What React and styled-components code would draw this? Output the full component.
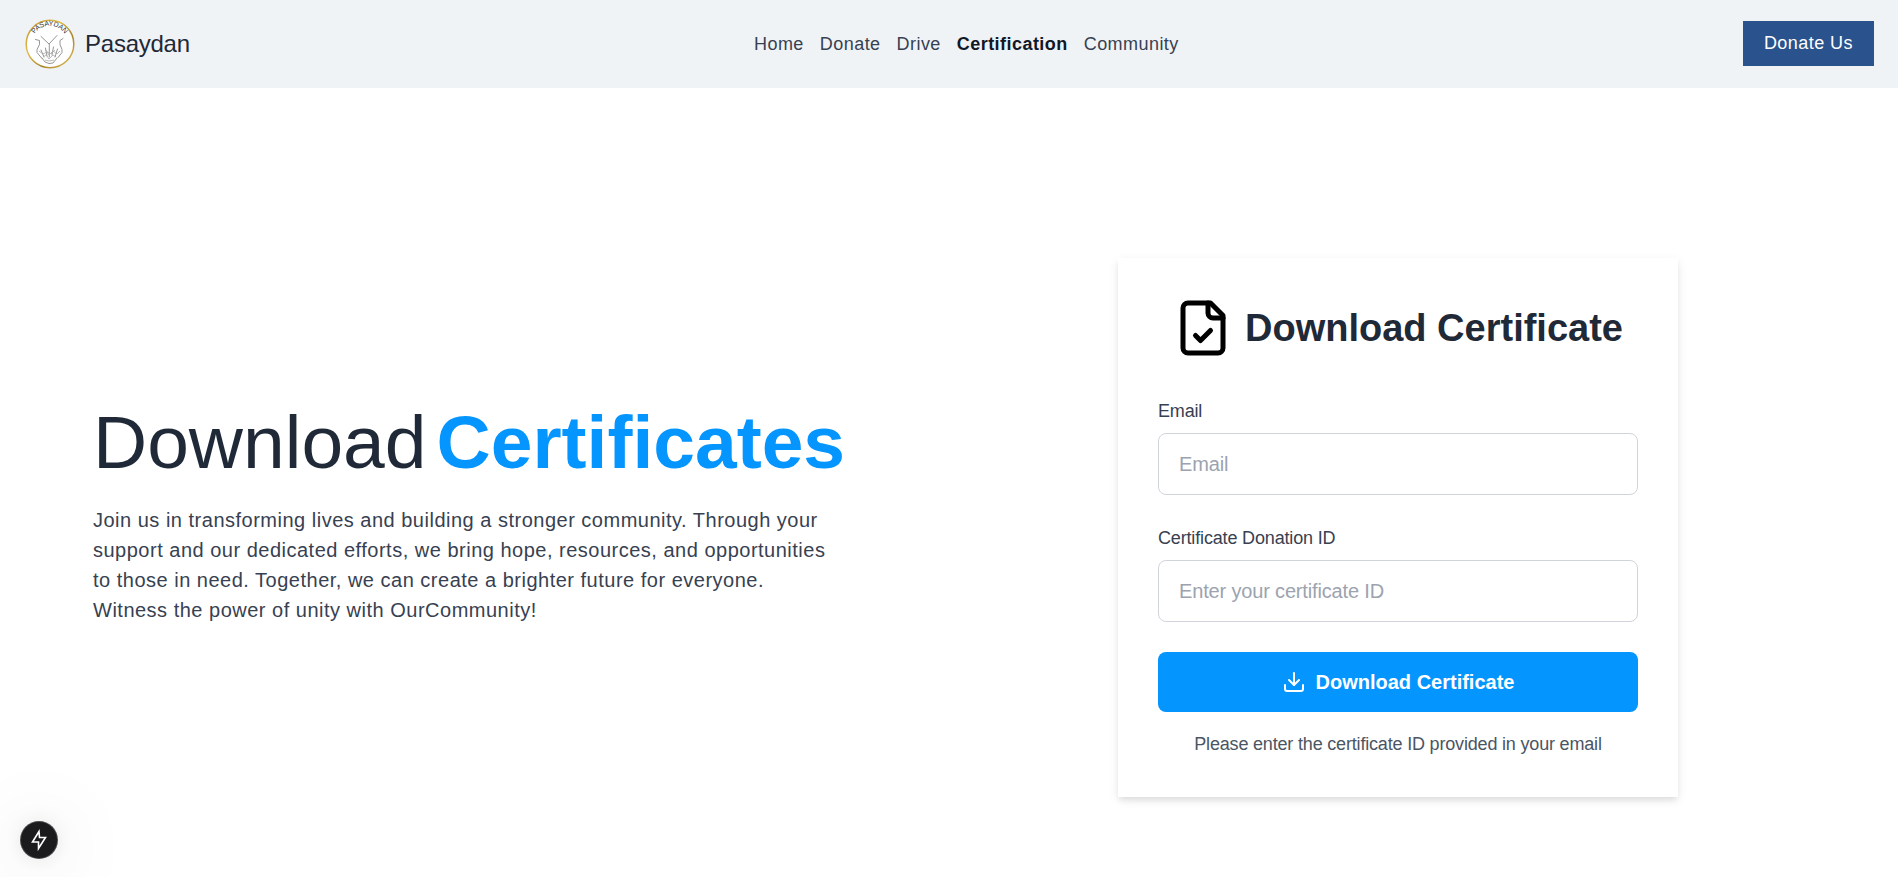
import React from "react";
import styled, { createGlobalStyle } from "styled-components";

const GlobalStyle = createGlobalStyle`
  *, *::before, *::after { box-sizing: border-box; }
  body {
    margin: 0;
    background: #ffffff;
    color: #1f2937;
    font-family: "Liberation Sans", Arial, sans-serif;
  }
  h1, h2, p { margin: 0; }
  button, input { font-family: inherit; letter-spacing: inherit; }
`;

const Page = styled.div`
  min-height: 100vh;
  display: flex;
  flex-direction: column;
`;

const Header = styled.header`
  display: flex;
  align-items: center;
  justify-content: space-between;
  height: 88px;
  padding: 0 24px 1px 25px;
  background: #eff3f6;
`;

const Brand = styled.a`
  display: flex;
  align-items: center;
  gap: 10px;
  color: #1f2937;
  font-size: 24px;
  line-height: 36px;
  letter-spacing: -0.01em;
  text-decoration: none;
`;

const Nav = styled.nav`
  display: flex;
  gap: 16px;
`;

const NavLink = styled.a`
  color: ${(p) => (p.$active ? "#111827" : "#374151")};
  font-size: 18px;
  font-weight: ${(p) => (p.$active ? 700 : 400)};
  line-height: 28px;
  letter-spacing: 0.025em;
  text-decoration: none;
`;

const DonateButton = styled.button`
  height: 45px;
  padding: 0 21px;
  border: 0;
  background: #2a528d;
  color: #ffffff;
  font-size: 18px;
  letter-spacing: 0.025em;
  cursor: pointer;
`;

const Main = styled.main`
  flex: 1;
  display: grid;
  grid-template-columns: 1fr 1fr;
  align-items: center;
  padding: 90px 51px 0;
`;

const Hero = styled.section`
  padding: 0 42px 28px;
`;

const HeroTitle = styled.h1`
  display: flex;
  gap: 10px;
  color: #1f2937;
  font-size: 75px;
  font-weight: 400;
  line-height: 78px;
  white-space: nowrap;
`;

const Accent = styled.span`
  color: #0495ff;
  font-weight: 700;
`;

const HeroText = styled.p`
  max-width: 740px;
  margin-top: 24px;
  color: #374151;
  font-size: 20px;
  line-height: 30px;
  letter-spacing: 0.025em;
`;

const Card = styled.form`
  justify-self: center;
  display: flex;
  flex-direction: column;
  gap: 30px;
  width: 100%;
  max-width: 560px;
  padding: 40px;
  background: #ffffff;
  box-shadow: 0 4px 6px -1px rgba(0, 0, 0, 0.1), 0 3px 12px rgba(0, 0, 0, 0.06);
`;

const CardHead = styled.div`
  display: flex;
  align-items: center;
  justify-content: center;
  gap: 12px;
  margin-bottom: 10px;
`;

const CardTitle = styled.h2`
  color: #1f2937;
  font-size: 38px;
  font-weight: 700;
  line-height: 60px;
  white-space: nowrap;
`;

const Field = styled.div`
  display: flex;
  flex-direction: column;
  gap: 8px;
  letter-spacing: -0.01em;
`;

const Label = styled.label`
  color: #374151;
  font-size: 18px;
  line-height: 27px;
`;

const Input = styled.input`
  width: 100%;
  height: 62px;
  padding: 0 20px;
  border: 1px solid #d1d5db;
  border-radius: 8px;
  background: #ffffff;
  color: #1f2937;
  font-size: 20px;
  &::placeholder { color: #9ca3af; opacity: 1; }
`;

const Actions = styled.div`
  display: flex;
  flex-direction: column;
  gap: 20px;
`;

const SubmitButton = styled.button`
  display: flex;
  align-items: center;
  justify-content: center;
  gap: 10px;
  height: 60px;
  border: 0;
  border-radius: 8px;
  background: #0495ff;
  color: #ffffff;
  font-size: 20px;
  font-weight: 700;
  cursor: pointer;
`;

const Note = styled.p`
  color: #4b5563;
  font-size: 18px;
  line-height: 25px;
  letter-spacing: -0.01em;
  text-align: center;
`;

const DevBadge = styled.button`
  position: fixed;
  left: 21px;
  bottom: 19px;
  display: grid;
  place-items: center;
  width: 36px;
  height: 36px;
  padding: 0;
  border: 0;
  border-radius: 50%;
  background: #1b1b1d;
  box-shadow: 0 0 0 1px #4a4a4c, 0 0 24px rgba(0, 0, 0, 0.1),
    0 6px 80px rgba(0, 0, 0, 0.18);
  cursor: pointer;
`;

const Logo = () => (
  <svg width="50" height="50" viewBox="0 0 50 50" aria-hidden="true">
    <defs>
      <linearGradient id="gold" x1="0" y1="0" x2="1" y2="1">
        <stop offset="0" stopColor="#b8902c" />
        <stop offset="0.35" stopColor="#e3bd4f" />
        <stop offset="0.65" stopColor="#a9842b" />
        <stop offset="1" stopColor="#e6c35c" />
      </linearGradient>
      <path id="arc" d="M7.500 20 A 17.500 17.500 0 0 1 41.500 20" />
    </defs>
    <circle cx="25" cy="25" r="23.800" fill="#ffffff" stroke="url(#gold)" strokeWidth="1.500" />
    <text fontSize="7" fill="#333333" fontFamily="Liberation Sans, Arial, sans-serif">
      <textPath href="#arc" startOffset="50%" textAnchor="middle">PASAYDAN</textPath>
    </text>
    <g fill="none" stroke="#8a8a8a" strokeWidth="0.900" strokeLinecap="round" strokeLinejoin="round">
      <path d="M10.500 20.500l4 1v4l-2.500 5v3l5 6" />
      <path d="M38 19.500l-3 2v4l2 5v3l-4 5" />
      <path d="M16 17.500l8 7.500 8-8.500" />
      <path d="M24.300 25v13" />
      <path d="M17 39l3 4 4 1.500 4-.500 4-5" />
      <path d="M16 31l3 7M20.500 29l1.500 8M28.500 28l-1.500 8M32.500 30l-2.500 8" />
    </g>
    <g fill="none" stroke="#aaaaaa" strokeWidth="0.800">
      <path d="M14 32l4 3 4-2 2 3 4-4 4 3 3-3M18 38l3-2 3 4 4-4 3 2M20 31l4 3M30 31l-4 4M20 41l4 1 5-1" />
    </g>
  </svg>
);

const FileCheckIcon = () => (
  <svg width="60" height="60" viewBox="0 0 24 24" fill="none" stroke="#000000" strokeWidth="2" strokeLinecap="round" strokeLinejoin="round" aria-hidden="true">
    <path d="M15 2H6a2 2 0 0 0-2 2v16a2 2 0 0 0 2 2h12a2 2 0 0 0 2-2V7Z" />
    <path d="M14 2v4a2 2 0 0 0 2 2h4" />
    <path d="m9 15 2 2 4-4" />
  </svg>
);

const DownloadIcon = () => (
  <svg width="24" height="24" viewBox="0 0 24 24" fill="none" stroke="currentColor" strokeWidth="2" strokeLinecap="round" strokeLinejoin="round" aria-hidden="true">
    <path d="M21 15v4a2 2 0 0 1-2 2H5a2 2 0 0 1-2-2v-4" />
    <path d="m7 10 5 5 5-5" />
    <path d="M12 15V3" />
  </svg>
);

const BoltIcon = () => (
  <svg width="18" height="22" viewBox="0 0 18 22" fill="none" stroke="#ffffff" strokeWidth="1.600" strokeLinejoin="miter" aria-hidden="true">
    <path d="M9 2.500 2.500 13H8.500V19.500L15.500 8.500H9.500Z" />
  </svg>
);

const links = ["Home", "Donate", "Drive", "Certification", "Community"];

export default function App() {
  return (
    <Page>
      <GlobalStyle />
      <Header>
        <Brand href="#">
          <Logo />
          Pasaydan
        </Brand>
        <Nav>
          {links.map((name) => (
            <NavLink key={name} href="#" $active={name === "Certification"}>
              {name}
            </NavLink>
          ))}
        </Nav>
        <DonateButton type="button">Donate Us</DonateButton>
      </Header>
      <Main>
        <Hero>
          <HeroTitle>
            Download <Accent>Certificates</Accent>
          </HeroTitle>
          <HeroText>
            Join us in transforming lives and building a stronger community.
            Through your support and our dedicated efforts, we bring hope,
            resources, and opportunities to those in need. Together, we can
            create a brighter future for everyone. Witness the power of unity
            with OurCommunity!
          </HeroText>
        </Hero>
        <Card onSubmit={(e) => e.preventDefault()}>
          <CardHead>
            <FileCheckIcon />
            <CardTitle>Download Certificate</CardTitle>
          </CardHead>
          <Field>
            <Label htmlFor="email">Email</Label>
            <Input id="email" type="email" placeholder="Email" />
          </Field>
          <Field>
            <Label htmlFor="certificate">Certificate Donation ID</Label>
            <Input id="certificate" type="text" placeholder="Enter your certificate ID" />
          </Field>
          <Actions>
            <SubmitButton type="submit">
              <DownloadIcon />
              Download Certificate
            </SubmitButton>
            <Note>Please enter the certificate ID provided in your email</Note>
          </Actions>
        </Card>
      </Main>
      <DevBadge type="button" aria-label="Developer tools">
        <BoltIcon />
      </DevBadge>
    </Page>
  );
}
